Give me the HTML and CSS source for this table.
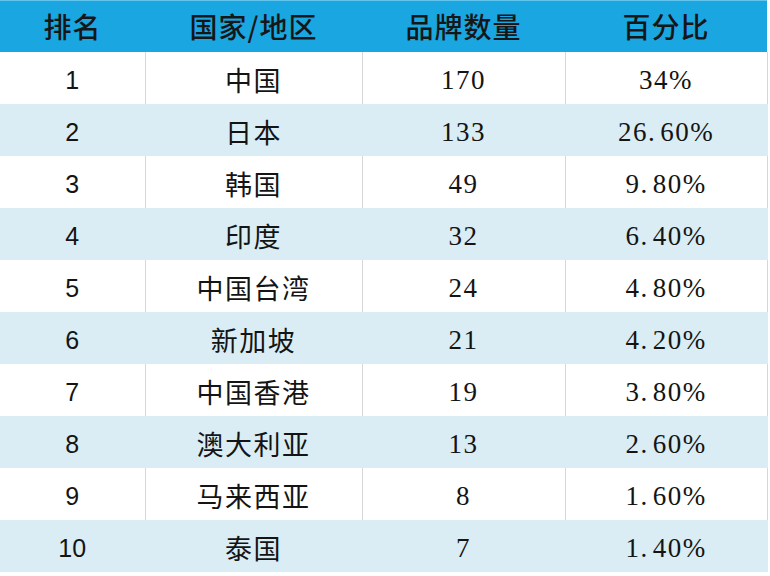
FILE: index.html
```html
<!DOCTYPE html>
<html lang="zh">
<head>
<meta charset="utf-8">
<link rel="stylesheet" href="styles.css">
</head>
<body>
<table class="rank-table">
  <colgroup>
    <col class="c1"><col class="c2"><col class="c3"><col class="c4">
  </colgroup>
  <thead>
    <tr><th>排名</th><th>国家/地区</th><th>品牌数量</th><th>百分比</th></tr>
  </thead>
  <tbody>
    <tr><td class="rank">1</td><td class="cn">中国</td><td class="num">170</td><td class="num">34%</td></tr>
    <tr><td class="rank">2</td><td class="cn">日本</td><td class="num">133</td><td class="num">26.<span class="dot-gap"></span>60%</td></tr>
    <tr><td class="rank">3</td><td class="cn">韩国</td><td class="num">49</td><td class="num">9.<span class="dot-gap"></span>80%</td></tr>
    <tr><td class="rank">4</td><td class="cn">印度</td><td class="num">32</td><td class="num">6.<span class="dot-gap"></span>40%</td></tr>
    <tr><td class="rank">5</td><td class="cn">中国台湾</td><td class="num">24</td><td class="num">4.<span class="dot-gap"></span>80%</td></tr>
    <tr><td class="rank">6</td><td class="cn">新加坡</td><td class="num">21</td><td class="num">4.<span class="dot-gap"></span>20%</td></tr>
    <tr><td class="rank">7</td><td class="cn">中国香港</td><td class="num">19</td><td class="num">3.<span class="dot-gap"></span>80%</td></tr>
    <tr><td class="rank">8</td><td class="cn">澳大利亚</td><td class="num">13</td><td class="num">2.<span class="dot-gap"></span>60%</td></tr>
    <tr><td class="rank">9</td><td class="cn">马来西亚</td><td class="num">8</td><td class="num">1.<span class="dot-gap"></span>60%</td></tr>
    <tr><td class="rank">10</td><td class="cn">泰国</td><td class="num">7</td><td class="num">1.<span class="dot-gap"></span>40%</td></tr>
  </tbody>
</table>
</body>
</html>
```
FILE: styles.css
```css
html, body {
  margin: 0;
  padding: 0;
  background: #ffffff;
}
body {
  width: 770px;
  height: 576px;
  overflow: hidden;
  font-family: "Noto Sans CJK SC", "Liberation Sans", sans-serif;
  color: #141414;
}
.rank-table {
  border-collapse: collapse;
  table-layout: fixed;
  width: 767px;
}
.c1 { width: 145px; }
.c2 { width: 217px; }
.c3 { width: 203px; }
.c4 { width: 202px; }

.rank-table tr {
  height: 52px;
}
.rank-table th {
  padding: 0;
  background: #19a6e1;
  box-shadow: inset 0 1px 0 #62c5ee;
  font-weight: 500;
  font-size: 28px;
  letter-spacing: 1px;
  text-align: center;
  vertical-align: middle;
  color: #161616;
  line-height: 36px;
}
.rank-table td {
  padding: 3px 0 0 0;
  text-align: center;
  vertical-align: middle;
  border-right: 1px solid #d6d6d6;
  line-height: 36px;
}
.rank-table tbody tr:nth-child(even) td {
  background: #daedf5;
  border-right-color: #daedf5;
}
.rank-table tbody tr:nth-child(odd) td {
  background: #ffffff;
}
.rank {
  font-family: "Liberation Sans", Arial, sans-serif;
  font-size: 25px;
}
.cn {
  font-size: 27px;
  letter-spacing: 1.5px;
}
.num {
  font-family: "Liberation Serif", "Times New Roman", serif;
  font-size: 27px;
  letter-spacing: 1.5px;
}
.dot-gap {
  display: inline-block;
  width: 4px;
}
```
